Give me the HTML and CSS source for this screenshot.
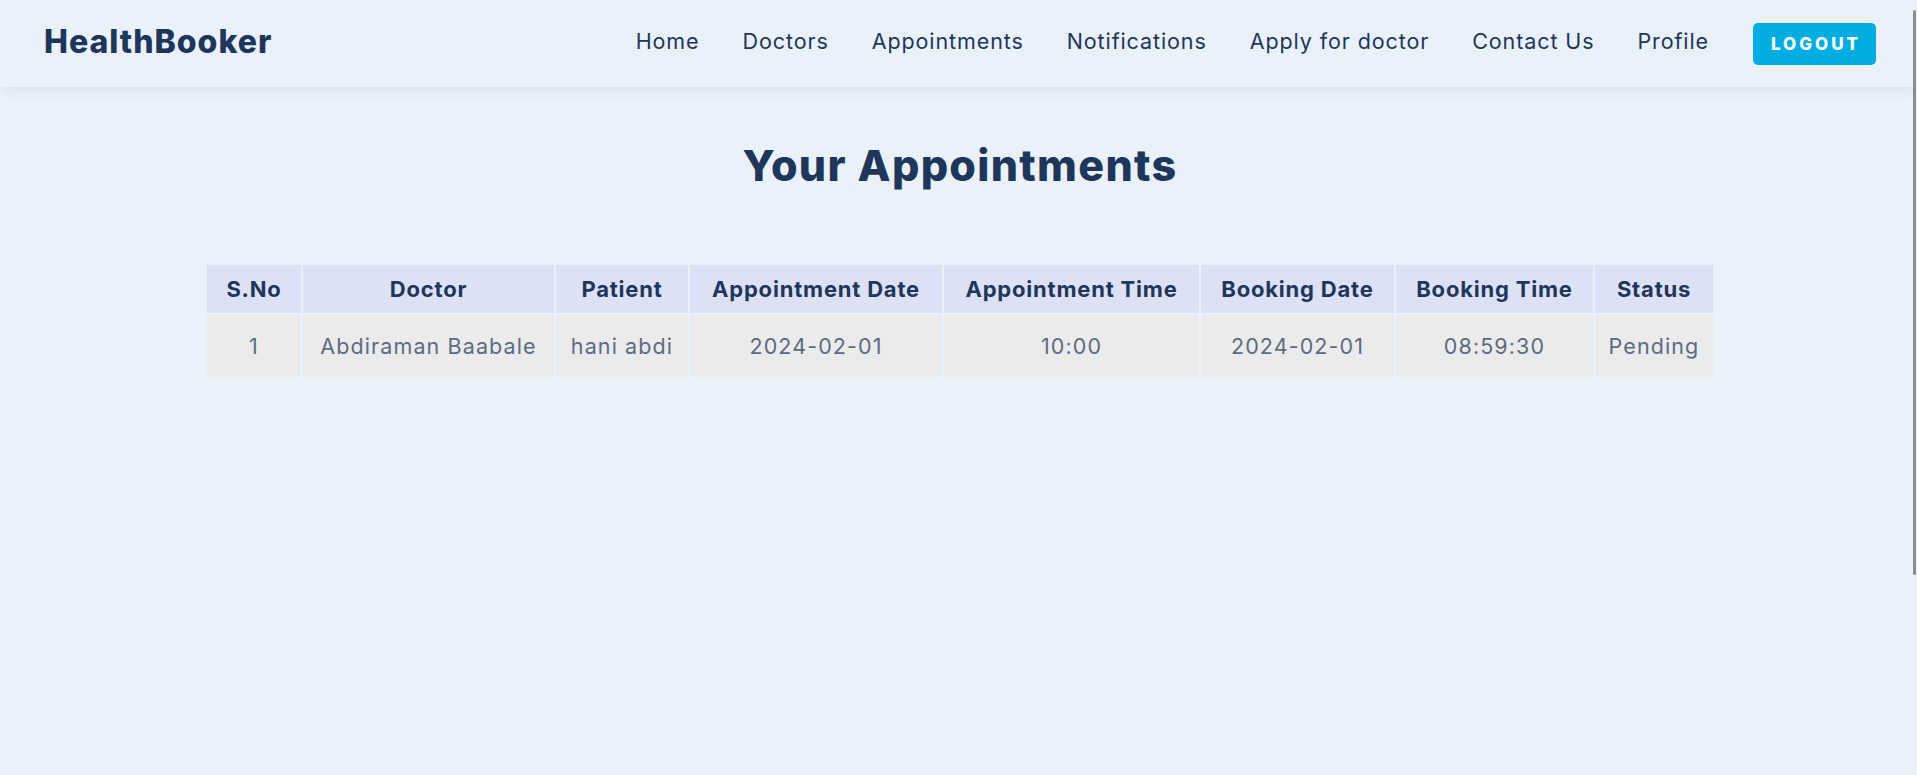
FILE: index.html
```html
<!DOCTYPE html>
<html lang="en">
<head>
<meta charset="utf-8">
<title>HealthBooker - Your Appointments</title>
<link rel="stylesheet" href="styles.css">
</head>
<body>
<header class="topbar">
  <div class="logo">HealthBooker</div>
  <nav class="nav">
    <a class="nav-link" href="#">Home</a>
    <a class="nav-link" href="#">Doctors</a>
    <a class="nav-link" href="#">Appointments</a>
    <a class="nav-link" href="#">Notifications</a>
    <a class="nav-link" href="#">Apply for doctor</a>
    <a class="nav-link" href="#">Contact Us</a>
    <a class="nav-link" href="#">Profile</a>
    <button class="logout-btn" type="button">Logout</button>
  </nav>
</header>
<main class="page">
  <h1 class="page-title">Your Appointments</h1>
  <table class="appt-table">
    <colgroup>
      <col class="c-sno"><col class="c-doctor"><col class="c-patient"><col class="c-adate">
      <col class="c-atime"><col class="c-bdate"><col class="c-btime"><col class="c-status">
    </colgroup>
    <thead>
      <tr>
        <th>S.No</th>
        <th>Doctor</th>
        <th>Patient</th>
        <th>Appointment Date</th>
        <th>Appointment Time</th>
        <th>Booking Date</th>
        <th>Booking Time</th>
        <th>Status</th>
      </tr>
    </thead>
    <tbody>
      <tr>
        <td>1</td>
        <td>Abdiraman Baabale</td>
        <td>hani abdi</td>
        <td>2024-02-01</td>
        <td>10:00</td>
        <td>2024-02-01</td>
        <td>08:59:30</td>
        <td>Pending</td>
      </tr>
    </tbody>
  </table>
</main>
<div class="scroll-thumb"></div>
</body>
</html>
```
FILE: styles.css
```css
* { box-sizing: border-box; }

html, body {
  margin: 0;
  padding: 0;
}

body {
  background: #e9f1fb;
  font-family: "Inter", "Open Sans", sans-serif;
  color: #1f365b;
  min-height: 100vh;
}

.topbar {
  height: 87px;
  display: flex;
  align-items: center;
  justify-content: space-between;
  padding: 0 41px 0 44px;
  background: #e9f1fb;
  box-shadow: 0 3px 12px rgba(40, 70, 120, 0.09);
  position: relative;
  z-index: 1;
}

.logo {
  font-size: 32px;
  font-weight: 800;
  letter-spacing: 1px;
  color: #1f365b;
  margin-top: -5px;
}

.nav {
  display: flex;
  align-items: center;
  gap: 43px;
}

.nav-link {
  font-size: 21.5px;
  color: #1f365b;
  text-decoration: none;
  letter-spacing: 0.9px;
  margin-top: -5px;
}

.logout-btn {
  width: 123px;
  height: 42px;
  border: none;
  border-radius: 5px;
  background: #00ade3;
  color: #ffffff;
  font-family: inherit;
  font-size: 17px;
  font-weight: 800;
  letter-spacing: 3px;
  text-transform: uppercase;
  padding: 0 0 0 3px;
  margin-left: 1px;
}

.page {
  display: flex;
  flex-direction: column;
  align-items: center;
  padding-left: 3px;
}

.page-title {
  margin: 52px 0 72px;
  font-size: 43px;
  line-height: 52px;
  font-weight: 800;
  color: #1f365b;
  letter-spacing: 1.3px;
}

.appt-table {
  width: 1510px;
  table-layout: fixed;
  border-collapse: separate;
  border-spacing: 2px;
}

.c-sno { width: 94px; }
.c-doctor { width: 251px; }
.c-patient { width: 132px; }
.c-adate { width: 252px; }
.c-atime { width: 255px; }
.c-bdate { width: 193px; }
.c-btime { width: 197px; }
.c-status { width: 118px; }

.appt-table th {
  background: #dce1f6;
  color: #1f365b;
  font-size: 22px;
  font-weight: 700;
  line-height: 28px;
  padding: 10px 2px;
  text-align: center;
  white-space: nowrap;
  letter-spacing: 0.8px;
}

.appt-table td {
  background: #ebebeb;
  color: #5b6b84;
  font-size: 21.5px;
  font-weight: 400;
  line-height: 30px;
  padding: 16px 2px;
  text-align: center;
  white-space: nowrap;
  letter-spacing: 1.1px;
}

.scroll-thumb {
  position: fixed;
  top: 10px;
  right: 1px;
  width: 3px;
  height: 565px;
  border-radius: 2px;
  background: #8c8c8c;
  z-index: 10;
}
```
